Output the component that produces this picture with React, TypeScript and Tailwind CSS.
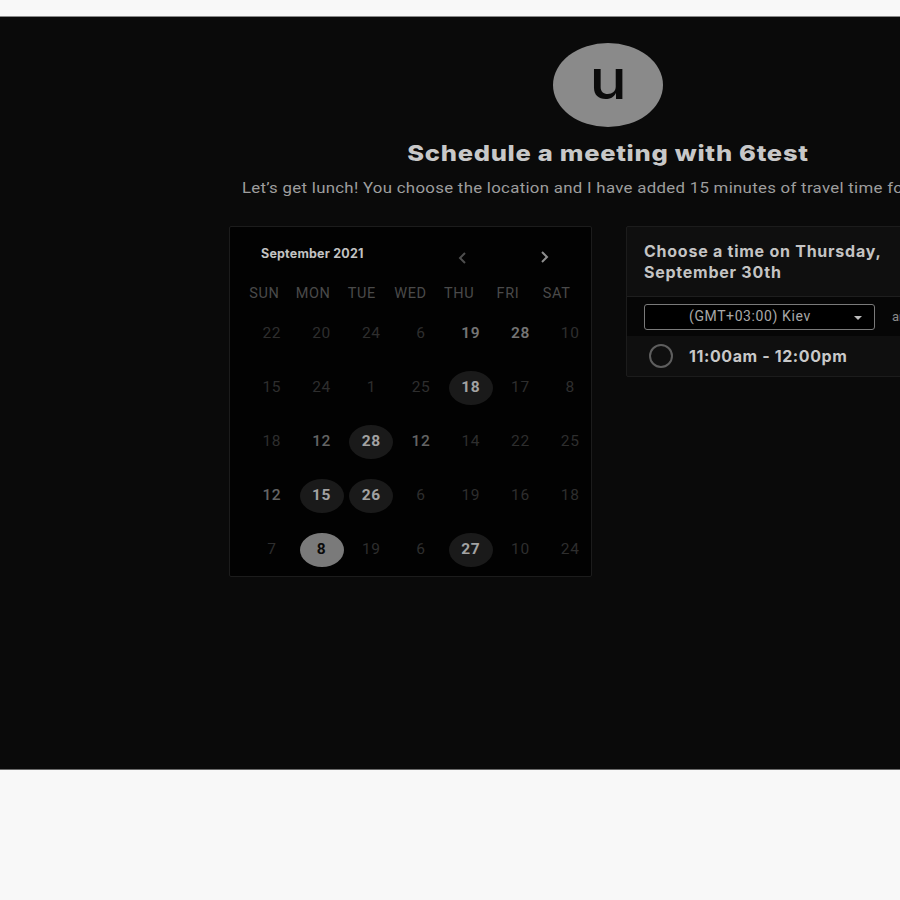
const weekdays = ["SUN", "MON", "TUE", "WED", "THU", "FRI", "SAT"];

type Day = { n: number; s: "dim" | "mid" | "hi" | "avail" | "sel" };

const rows: Day[][] = [
  [
    { n: 22, s: "dim" },
    { n: 20, s: "dim" },
    { n: 24, s: "dim" },
    { n: 6, s: "dim" },
    { n: 19, s: "hi" },
    { n: 28, s: "hi" },
    { n: 10, s: "dim" },
  ],
  [
    { n: 15, s: "dim" },
    { n: 24, s: "dim" },
    { n: 1, s: "dim" },
    { n: 25, s: "dim" },
    { n: 18, s: "avail" },
    { n: 17, s: "dim" },
    { n: 8, s: "dim" },
  ],
  [
    { n: 18, s: "dim" },
    { n: 12, s: "mid" },
    { n: 28, s: "avail" },
    { n: 12, s: "mid" },
    { n: 14, s: "dim" },
    { n: 22, s: "dim" },
    { n: 25, s: "dim" },
  ],
  [
    { n: 12, s: "mid" },
    { n: 15, s: "avail" },
    { n: 26, s: "avail" },
    { n: 6, s: "dim" },
    { n: 19, s: "dim" },
    { n: 16, s: "dim" },
    { n: 18, s: "dim" },
  ],
  [
    { n: 7, s: "dim" },
    { n: 8, s: "sel" },
    { n: 19, s: "dim" },
    { n: 6, s: "dim" },
    { n: 27, s: "avail" },
    { n: 10, s: "dim" },
    { n: 24, s: "dim" },
  ],
];

const dayClass = {
  dim: "text-[#2e2e2e]",
  mid: "text-[#646464] font-medium",
  hi: "text-[#747474] font-semibold",
  avail: "bg-[#1a1a1a] text-[#a2a2a2] font-bold",
  sel: "bg-[#7a7a7a] text-[#0a0a0a] font-bold",
};

const Calendar = () => (
  <div className="w-[363px] h-[351px] bg-[#020202] border border-[#1c1c1c] rounded-[2px] pt-[16px] font-['Roboto',sans-serif]">
    <div className="flex items-center h-[22px]">
      <span className="ml-[31px] text-[12.5px] font-bold text-[#c2c2c2] font-['Inter',sans-serif] tracking-[0.2px]">
        September 2021
      </span>
      <svg className="ml-[93px] mt-[8px]" width="12" height="14" viewBox="0 0 12 14">
        <path d="M8 2 L3 7 L8 12" stroke="#4e4e4e" strokeWidth="2" fill="none" />
      </svg>
      <svg className="ml-[69px] mt-[6px]" width="12" height="14" viewBox="0 0 12 14">
        <path d="M4 2 L9 7 L4 12" stroke="#8e8e8e" strokeWidth="2" fill="none" />
      </svg>
    </div>
    <div className="grid grid-cols-7 mx-[10px] mt-[18px] text-[14.5px] text-[#4a4a4a] tracking-[0.6px]">
      {weekdays.map((w) => (
        <div key={w} className="text-center">
          {w}
        </div>
      ))}
    </div>
    <div className="ml-[17px] w-[348px] mt-[12px] flex flex-col gap-[20px]">
      {rows.map((r, i) => (
        <div key={i} className="grid grid-cols-7">
          {r.map((d, j) => (
            <div key={j} className="flex justify-center">
              <div
                className={`w-[44px] h-[34px] rounded-[50%] flex items-center justify-center text-[15.5px] tracking-[0.6px] ${dayClass[d.s]}`}
              >
                {d.n}
              </div>
            </div>
          ))}
        </div>
      ))}
    </div>
  </div>
);

const TimePanel = () => (
  <div className="w-[380px] bg-[#0f0f0f] border border-[#1c1c1c] rounded-[2px] font-['Inter',sans-serif] self-start">
    <div className="h-[69px] px-[17px] pt-[14px] text-[16px] font-bold leading-[21px] text-[#c4c4c4] tracking-[0.75px]">
      Choose a time on Thursday,
      <br />
      September 30th
    </div>
    <div className="h-[40px] bg-[#060606] border-t border-[#1e1e1e] flex items-center px-[17px]">
      <div className="w-[231px] h-[26px] border border-[#7a7a7a] rounded-[3px] bg-black flex items-center relative">
        <span className="ml-[44px] text-[14px] text-[#a8a8a8] font-['Roboto',sans-serif] tracking-[0.6px]">
          (GMT+03:00) Kiev
        </span>
        <span className="absolute right-[12px] top-[11px] w-0 h-0 border-l-[4px] border-r-[4px] border-t-[4px] border-l-transparent border-r-transparent border-t-[#bdbdbd]" />
      </div>
      <span className="ml-[17px] text-[13px] text-[#8a8a8a] font-['Roboto',sans-serif]">am</span>
    </div>
    <div className="h-[40px] flex items-center px-[22px]">
      <div className="w-[24px] h-[24px] rounded-full border-[2px] border-[#5e5e5e]" />
      <span className="ml-[16px] text-[16px] font-bold text-[#c8c8c8] tracking-[0.6px]">
        11:00am - 12:00pm
      </span>
    </div>
  </div>
);

export default function App() {
  return (
    <div className="w-[900px] h-[900px] bg-[#f8f8f8] overflow-hidden">
      <div className="h-[17px] border-b border-[#8a8a8a]" />
      <div className="h-[753px] bg-[#0a0a0a] border-b border-[#6a6a6a] overflow-hidden">
        <div className="w-[1216px] flex flex-col items-center">
          <div className="mt-[26px] w-[110px] h-[84px] rounded-[50%] bg-[#8a8a8a] flex items-center justify-center">
            <span className="text-[54px] leading-none text-[#0b0b0b] font-['Inter',sans-serif] font-medium -mt-[10px] scale-x-[1.15]">
              u
            </span>
          </div>
          <h1 className="mt-[10px] text-[22px] font-extrabold text-[#c8c8c8] font-['Inter',sans-serif] tracking-[0.6px] scale-x-[1.16]">
            Schedule a meeting with 6test
          </h1>
          <p className="self-stretch pl-[242px] mt-[8px] whitespace-nowrap text-[14px] text-[#9e9e9e] font-['Roboto',sans-serif] tracking-[0.25px]">
            <span className="inline-block origin-left scale-x-[1.2]">
              Let’s get lunch! You choose the location and I have added 15 minutes of travel time for you.
            </span>
          </p>
          <div className="self-stretch pl-[229px] mt-[27px] flex gap-[34px]">
            <Calendar />
            <TimePanel />
          </div>
        </div>
      </div>
    </div>
  );
}
